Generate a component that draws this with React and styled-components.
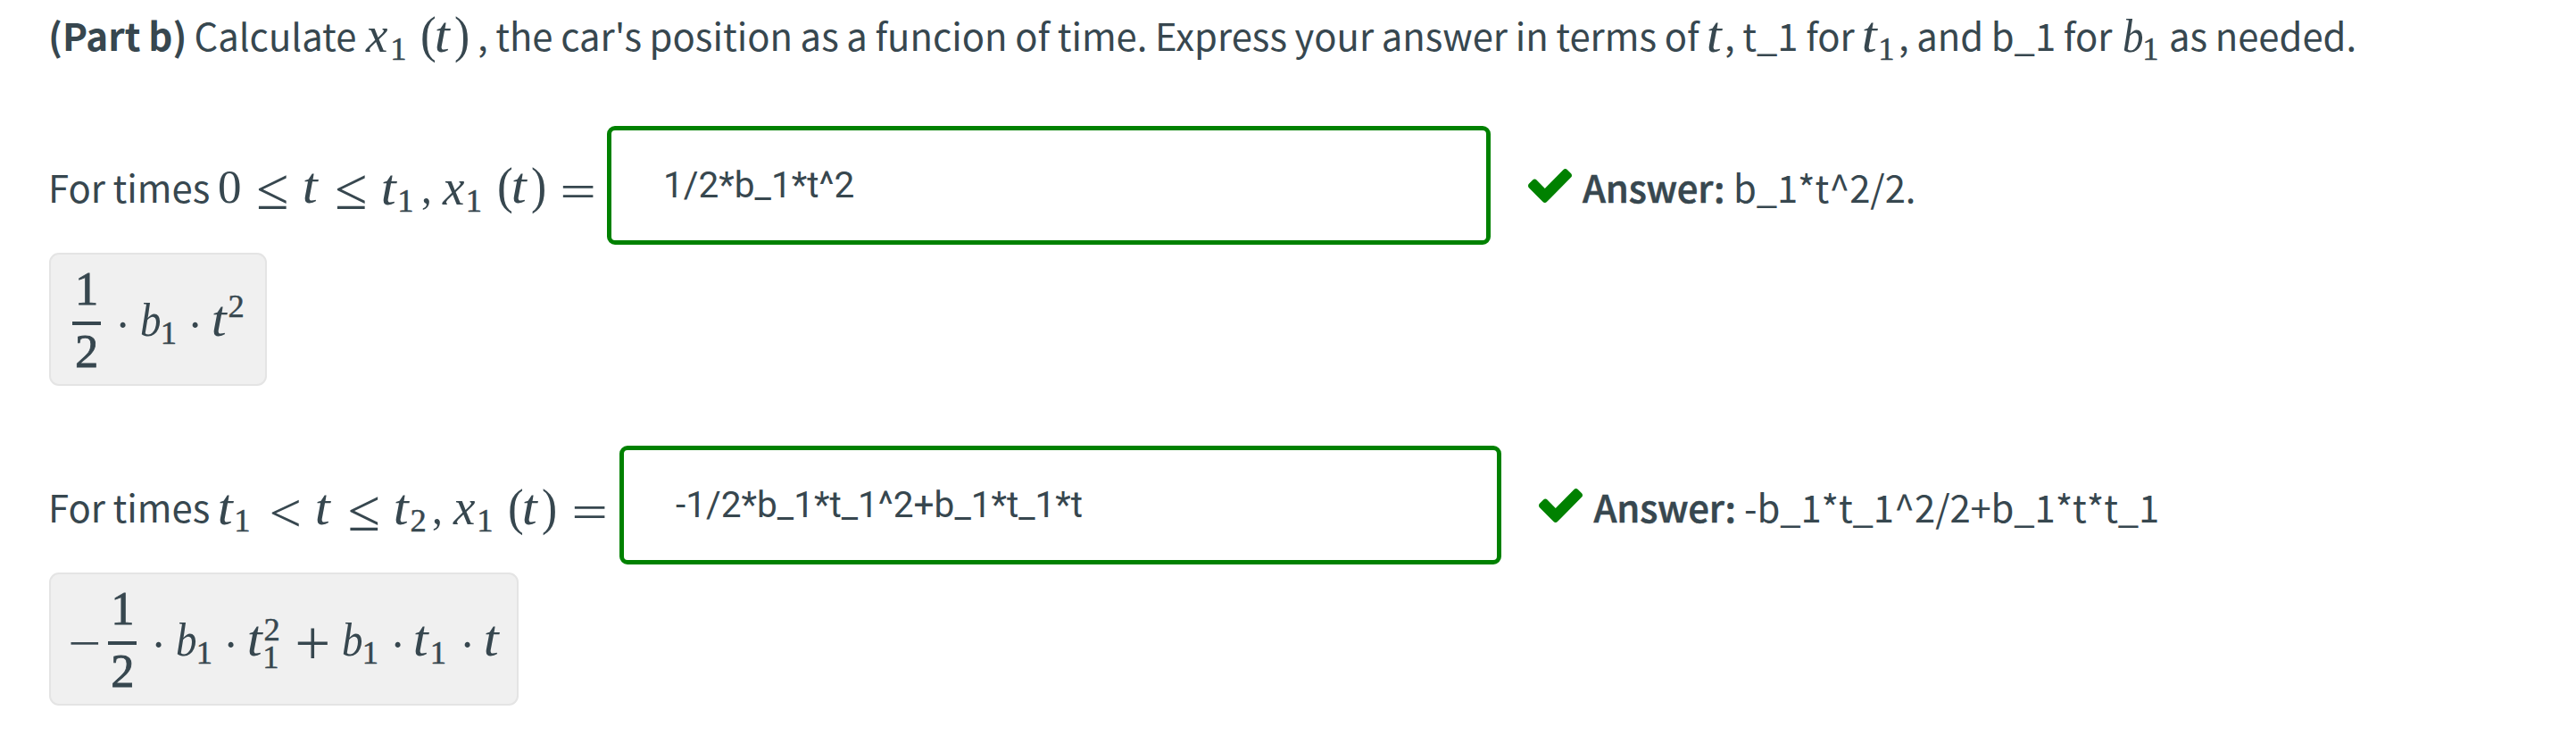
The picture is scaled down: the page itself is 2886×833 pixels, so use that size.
import React from "react";
import styled, { createGlobalStyle } from "styled-components";

const GlobalStyle = createGlobalStyle`
  body {
    margin: 0;
    background: #fff;
    color: #37474f;
  }
`;

const Page = styled.main`
  padding: 0 0 0 54px;
  font-family: "Noto Sans CJK SC", "Open Sans", sans-serif;
  font-size: 41.8px;
  word-spacing: -0.75px;
  white-space: nowrap;
`;

const Prompt = styled.p`
  margin: 0 0 62px;
  height: 79px;
  line-height: 79px;
`;

const Problem = styled.section`
  margin-bottom: 67px;
`;

const AnswerRow = styled.div`
  display: flex;
  align-items: flex-start;
  height: 133px;
  line-height: 137px;
`;

const Text = styled.span`
  display: inline-block;
  width: ${(p) => p.$w}px;
  line-height: 0;
`;

const PartLabel = styled(Text)`
  font-weight: 700;
  font-size: 42.2px;
`;

const AnswerLabel = styled(Text)`
  font-weight: 500;
  letter-spacing: -0.2px;
  -webkit-text-stroke: 0.6px currentColor;
`;

const Solution = styled(Text)`
  letter-spacing: -0.1px;
`;

const Field = styled.input`
  box-sizing: border-box;
  flex: none;
  width: ${(p) => p.$w}px;
  height: 133px;
  padding: 0 0 2px ${(p) => p.$indent}px;
  border: 5px solid #008100;
  border-radius: 9px;
  background: #fff;
  color: inherit;
  font: 400 40.6px Roboto, sans-serif;
  outline: none;
`;

const Check = styled.svg`
  flex: none;
  width: 49px;
  height: 38px;
  margin: 48px 12.5px 0 42px;
  fill: #008100;
`;

const Preview = styled.div`
  box-sizing: border-box;
  display: flex;
  width: ${(p) => p.$w}px;
  height: 149px;
  margin: 9px 0 0 1px;
  padding-left: ${(p) => p.$indent}px;
  border: 2px solid #e4e4e4;
  border-radius: 11px;
  background: #f0f0f0;
  line-height: 147px;
`;

const FractionBox = styled.span`
  display: flex;
  flex-direction: column;
  width: 32px;
  margin-right: 20.5px;
  font-family: "Liberation Serif", serif;
  font-size: 52.5px;
  text-align: center;
  -webkit-text-stroke: 0.8px currentColor;
`;

const Numerator = styled.span`
  height: 75px;
  line-height: 77px;
`;

const Denominator = styled.span`
  height: 66px;
  border-top: 4px solid currentColor;
  line-height: 59px;
`;

/* Per-symbol metrics: size, left bearing, horizontal stretch, drop below the baseline. */
const METRICS = {
  x: { size: 56, left: -1, stretch: 0.98, italic: true },
  t: { size: 57, left: 2, stretch: 1.07, italic: true },
  b: { size: 53.5, left: 1, stretch: 0.88, italic: true },
  "(": { size: 56, left: 2, stretch: 0.95 },
  ")": { size: 56, left: 1, stretch: 0.92 },
  ",": { size: 50, left: 2, stretch: 0.95 },
  0: { size: 53, left: 2, stretch: 1 },
  "≤": { size: 66, left: 2.5, stretch: 1, drop: 7 },
  "<": { size: 62, left: 2.3, stretch: 1.04, drop: 8 },
  "=": { size: 53, left: 2, stretch: 1.36, drop: 4.5 },
  "−": { size: 53, left: 2, stretch: 1.24, drop: 4 },
  "+": { size: 71, left: 2.7, stretch: 1, drop: 10 },
  "·": { size: 53, left: 5, stretch: 0.95, drop: 5 },
};

const Glyph = styled.span`
  display: inline-block;
  width: ${(p) => p.$w}px;
  font-family: "Liberation Serif", serif;
  font-size: ${(p) => p.$m.size}px;
  font-style: ${(p) => (p.$m.italic ? "italic" : "normal")};
  line-height: 0;
  vertical-align: ${(p) => -(p.$m.drop || 0) - p.$drop}px;
  transform: translateX(${(p) => -p.$m.left * p.$m.stretch}px) scaleX(${(p) => p.$m.stretch});
  transform-origin: 0 50%;
`;

const Script = styled.span`
  display: inline-block;
  width: ${(p) => p.$w}px;
  font-family: "Liberation Serif", serif;
  font-size: 36.5px;
  line-height: 0;
  text-indent: ${(p) => (p.$narrow ? -2.7 : -1.4)}px;
  vertical-align: ${(p) => p.$rise}px;
  -webkit-text-stroke: 0.5px currentColor;
`;

function M({ c, w, drop = 0 }) {
  return (
    <Glyph $m={METRICS[c]} $w={w} $drop={drop}>
      {c}
    </Glyph>
  );
}

function S({ c, w, rise = -10 }) {
  return (
    <Script $w={w} $rise={rise} $narrow={c === "1"}>
      {c}
    </Script>
  );
}

function Half() {
  return (
    <FractionBox>
      <Numerator>1</Numerator>
      <Denominator>2</Denominator>
    </FractionBox>
  );
}

function CheckIcon() {
  return (
    <Check viewBox="121 334 1550 1188" preserveAspectRatio="none">
      <path d="M1671 566q0 40-28 68l-724 724-136 136q-28 28-68 28t-68-28l-136-136-362-362q-28-28-28-68t28-68l136-136q28-28 68-28t68 28l294 295 656-657q28-28 68-28t68 28l136 136q28 28 28 68z" />
    </Check>
  );
}

export default function App() {
  return (
    <Page>
      <GlobalStyle />
      <Prompt>
        <PartLabel $w={163.5}>(Part b)</PartLabel>
        <Text $w={191.5}>Calculate</Text>
        <M c="x" w={31} drop={1} />
        <S c="1" w={33} />
        <M c="(" w={16} drop={1} />
        <M c="t" w={21} drop={1} />
        <M c=")" w={25} drop={1} />
        <Text $w={1379}>
          , the car's position as a funcion of time. Express your answer in terms of
        </Text>
        <M c="t" w={18} drop={1} />
        <Text $w={156}>, t_1 for</Text>
        <M c="t" w={19} drop={1} />
        <S c="1" w={20} />
        <Text $w={252}>, and b_1 for</Text>
        <M c="b" w={24} drop={1} />
        <S c="1" w={27} />
        <Text $w={210}>as needed.</Text>
      </Prompt>

      <Problem>
        <AnswerRow>
          <span>
            <Text $w={192}>For times</Text>
            <M c="0" w={43.5} />
            <M c="≤" w={51.5} />
            <M c="t" w={36.5} />
            <M c="≤" w={51.5} />
            <M c="t" w={19} drop={2} />
            <S c="1" w={26} />
            <M c="," w={20.5} />
            <M c="x" w={30} drop={2} />
            <S c="1" w={34} />
            <M c="(" w={16.5} />
            <M c="t" w={21} />
            <M c=")" w={34} />
            <M c="=" w={50} />
          </span>
          <Field $w={989.5} $indent={58} defaultValue="1/2*b_1*t^2" />
          <CheckIcon />
          <span>
            <AnswerLabel $w={169}>Answer:</AnswerLabel>
            <Solution $w={210}>b_1*t^2/2.</Solution>
          </span>
        </AnswerRow>
        <Preview $w={244} $indent={24}>
          <Half />
          <span>
            <M c="·" w={24.5} />
            <M c="b" w={24.5} />
            <S c="1" w={32.8} rise={-9} />
            <M c="·" w={23.7} />
            <M c="t" w={18} />
            <S c="2" w={20} rise={21} />
          </span>
        </Preview>
      </Problem>

      <Problem>
        <AnswerRow>
          <span>
            <Text $w={191.5}>For times</Text>
            <M c="t" w={19.5} drop={1.5} />
            <S c="1" w={39} />
            <M c="<" w={51} drop={1.5} />
            <M c="t" w={37} drop={1.5} />
            <M c="≤" w={51} drop={1.5} />
            <M c="t" w={18} drop={1.5} />
            <S c="2" w={25} />
            <M c="," w={20.5} drop={1} />
            <M c="x" w={30.5} drop={1.5} />
            <S c="1" w={34} />
            <M c="(" w={16} drop={1.5} />
            <M c="t" w={21} drop={1.5} />
            <M c=")" w={35} drop={1.5} />
            <M c="=" w={51} drop={1.5} />
          </span>
          <Field $w={988} $indent={58} defaultValue="-1/2*b_1*t_1^2+b_1*t_1*t" />
          <CheckIcon />
          <span>
            <AnswerLabel $w={168.5}>Answer:</AnswerLabel>
            <Solution $w={480}>-b_1*t_1^2/2+b_1*t*t_1</Solution>
          </span>
        </AnswerRow>
        <Preview $w={526} $indent={21.7}>
          <span>
            <M c="−" w={42.7} />
          </span>
          <Half />
          <span>
            <M c="·" w={24} />
            <M c="b" w={24.5} />
            <S c="1" w={33} rise={-9} />
            <M c="·" w={23.5} />
            <M c="t" w={18} />
            <S c="2" w={0} rise={17} />
            <S c="1" w={36} rise={-14} />
            <M c="+" w={51} />
            <M c="b" w={24.5} />
            <S c="1" w={33.5} rise={-9} />
            <M c="·" w={23} />
            <M c="t" w={19.5} />
            <S c="1" w={35.5} rise={-9} />
            <M c="·" w={24} />
            <M c="t" w={20} />
          </span>
        </Preview>
      </Problem>
    </Page>
  );
}
